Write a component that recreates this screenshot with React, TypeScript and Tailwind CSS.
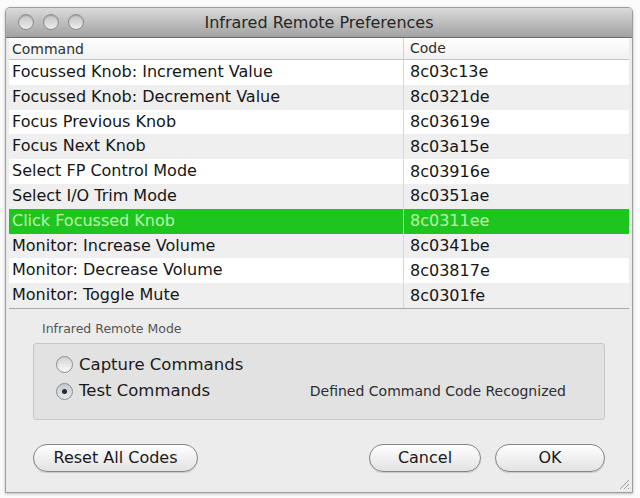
const rows = [
  { command: "Focussed Knob: Increment Value", code: "8c03c13e" },
  { command: "Focussed Knob: Decrement Value", code: "8c0321de" },
  { command: "Focus Previous Knob", code: "8c03619e" },
  { command: "Focus Next Knob", code: "8c03a15e" },
  { command: "Select FP Control Mode", code: "8c03916e" },
  { command: "Select I/O Trim Mode", code: "8c0351ae" },
  { command: "Click Focussed Knob", code: "8c0311ee" },
  { command: "Monitor: Increase Volume", code: "8c0341be" },
  { command: "Monitor: Decrease Volume", code: "8c03817e" },
  { command: "Monitor: Toggle Mute", code: "8c0301fe" },
]

const selected = 6

function Lights() {
  return (
    <div className="flex gap-[9px]">
      {[0, 1, 2].map((i) => (
        <span
          key={i}
          className="h-[16px] w-[16px] rounded-full border border-[#8e8e8e] bg-gradient-to-b from-[#c4c4c4] to-[#ececec] shadow-[inset_0_1px_1px_rgba(0,0,0,0.2)]"
        />
      ))}
    </div>
  )
}

function Radio({ checked, label }: { checked?: boolean; label: string }) {
  return (
    <div className="flex items-center gap-[6px]">
      <span
        className={
          "flex h-[17px] w-[17px] items-center justify-center rounded-full border border-[#8d8d8d] " +
          (checked ? "bg-gradient-to-b from-[#c3cad4] to-[#e6eaef]" : "bg-gradient-to-b from-[#d2d2d2] to-[#fafafa]")
        }
      >
        {checked && <span className="h-[5px] w-[5px] rounded-full bg-[#2a2a2a]" />}
      </span>
      <span className="text-[16.5px] leading-[20px] text-[#1a1a1a]">{label}</span>
    </div>
  )
}

function Pill({ children, className }: { children: React.ReactNode; className?: string }) {
  return (
    <button
      className={
        "flex h-[28px] items-center justify-center rounded-full border border-[#858585] bg-gradient-to-b from-[#ffffff] to-[#e2e2e2] text-[16px] text-[#1a1a1a] shadow-[0_1px_1px_rgba(0,0,0,0.15)] " +
        (className ?? "")
      }
    >
      {children}
    </button>
  )
}

export default function App() {
  return (
    <div
      className="h-[498px] w-[640px] bg-[#fbfbfb] pl-[5px] pr-[7px] pt-[7px]"
      style={{ fontFamily: '"DejaVu Sans", sans-serif' }}
    >
      <div className="flex h-[486px] flex-col overflow-hidden rounded-t-[5px] border border-[#9c9c9c] bg-[#ececec] shadow-[0_1px_3px_rgba(0,0,0,0.25)]">
        {/* title bar */}
        <div className="relative flex h-[30px] items-center justify-center border-b border-[#6c6c6c] bg-gradient-to-b from-[#dadada] to-[#a2a2a2]">
          <div className="absolute left-[12px] top-[6px]">
            <Lights />
          </div>
          <span className="text-[16px] text-[#262626]">Infrared Remote Preferences</span>
        </div>

        {/* table */}
        <div className="mx-[3px] flex flex-col border-b border-[#a6a6a6] bg-white">
          <div className="flex h-[22px] items-center border-b border-[#c4c4c4] bg-gradient-to-b from-[#ffffff] to-[#f1f1f1] text-[14px] text-[#2e2e2e]">
            <span className="w-[395px] border-r border-[#d2d2d2] pl-[3px] leading-[22px]">Command</span>
            <span className="pl-[6px]">Code</span>
          </div>
          {rows.map((row, i) => (
            <div
              key={row.code}
              className={
                "flex h-[24.8px] items-center text-[16px] " +
                (i === selected
                  ? "bg-[#1fc51f] text-[#b8f5a8]"
                  : i % 2 === 1
                    ? "bg-[#efefef] text-[#161616]"
                    : "bg-white text-[#161616]")
              }
            >
              <span className="h-full w-[395px] border-r border-[#d8d8d8] pl-[3px] leading-[24.8px]">
                {row.command}
              </span>
              <span className="pl-[6px]">{row.code}</span>
            </div>
          ))}
        </div>

        {/* remote mode */}
        <div className="flex flex-col px-[27px] pt-[11px]">
          <span className="pl-[9px] text-[12.5px] text-[#555]">Infrared Remote Mode</span>
          <div className="mt-[4px] flex h-[77px] flex-col justify-center gap-[6px] rounded-[3px] border border-[#c8c8c8] bg-[#e2e2e2] pb-[6px] pl-[22px] pr-[38px]">
            <Radio label="Capture Commands" />
            <div className="flex items-center justify-between">
              <Radio checked label="Test Commands" />
              <span className="text-[14px] text-[#2e2e2e]">Defined Command Code Recognized</span>
            </div>
          </div>
        </div>

        {/* buttons */}
        <div className="flex items-center px-[27px] pt-[24px]">
          <Pill className="w-[165px]">Reset All Codes</Pill>
          <div className="flex-1" />
          <Pill className="w-[112px]">Cancel</Pill>
          <Pill className="ml-[14px] w-[110px] border-[#6f7c8c] from-[#dfe6ee] to-[#b9c6d4]">OK</Pill>
        </div>

        <div className="relative flex-1">
          <svg className="absolute bottom-[2px] right-[2px]" width="12" height="12" viewBox="0 0 12 12">
            <path d="M11 2 L2 11 M11 6 L6 11 M11 10 L10 11" stroke="#9a9a9a" strokeWidth="1" />
          </svg>
        </div>
      </div>
    </div>
  )
}
